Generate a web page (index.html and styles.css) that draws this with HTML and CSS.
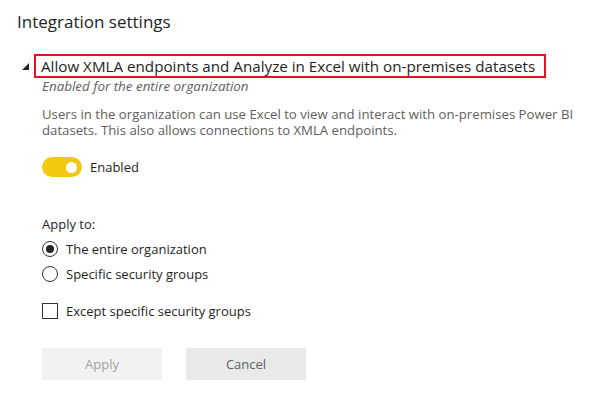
FILE: index.html
```html
<!DOCTYPE html>
<html>
<head>
<meta charset="utf-8">
<link rel="stylesheet" href="styles.css">
</head>
<body>
<div class="page">
  <h1 class="title">Integration settings</h1>
  <div class="setting">
    <div class="setting-head">
      <svg class="caret" width="7" height="7" viewBox="0 0 7 7"><polygon points="7,0 7,7 0,7" fill="#252423"/></svg>
      <div class="setting-name">Allow XMLA endpoints and Analyze in Excel with on-premises datasets</div>
    </div>
    <div class="setting-body">
      <div class="status">Enabled for the entire organization</div>
      <p class="desc">Users in the organization can use Excel to view and interact with on-premises Power BI datasets. This also allows connections to XMLA endpoints.</p>
      <div class="toggle-row">
        <span class="toggle"><span class="knob"></span></span>
        <span class="toggle-label">Enabled</span>
      </div>
      <div class="apply-label">Apply to:</div>
      <div class="option">
        <span class="radio checked"></span>
        <span>The entire organization</span>
      </div>
      <div class="option">
        <span class="radio"></span>
        <span>Specific security groups</span>
      </div>
      <div class="option check-option">
        <span class="checkbox"></span>
        <span>Except specific security groups</span>
      </div>
      <div class="buttons">
        <button class="btn btn-apply">Apply</button>
        <button class="btn btn-cancel">Cancel</button>
      </div>
    </div>
  </div>
</div>
</body>
</html>
```
FILE: styles.css
```css
* { box-sizing: border-box; }
html, body { margin: 0; padding: 0; background: #fff; }
body {
  font-family: "Open Sans", "Noto Sans", sans-serif;
  color: #252423;
  width: 610px;
  height: 403px;
  overflow: hidden;
}
.page { padding: 9px 0 0 17px; }
.title {
  font-weight: 400;
  font-size: 17px;
  line-height: 26px;
  margin: 0 0 19px 0;
  color: #252423;
}
.setting-head {
  display: flex;
  align-items: center;
}
.caret { margin: 0 6px 0 5px; }
.setting-name {
  font-size: 15.2px;
  line-height: 20px;
  border: 2px solid #e81123;
  padding: 0 5px 0 5px;
  width: 512px;
  margin-left: -1px;
}
.setting-body { padding-left: 25px; }
.status {
  font-style: italic;
  font-size: 13.4px;
  line-height: 16px;
  color: #605e5c;
}
.desc {
  margin: 12px 0 0 0;
  font-size: 13.2px;
  line-height: 16px;
  color: #605e5c;
  width: 560px;
}
.toggle-row {
  display: flex;
  align-items: center;
  margin-top: 19px;
}
.toggle {
  width: 40px;
  height: 20px;
  border-radius: 10px;
  background: #f2c811;
  position: relative;
  display: inline-block;
}
.knob {
  position: absolute;
  width: 11px;
  height: 11px;
  border-radius: 50%;
  background: #fff;
  right: 5px;
  top: 4.5px;
}
.toggle-label {
  margin-left: 8px;
  font-size: 13px;
  color: #252423;
}
.apply-label {
  margin-top: 38px;
  font-size: 13px;
  line-height: 18px;
  color: #252423;
}
.option {
  display: flex;
  align-items: center;
  font-size: 13px;
  line-height: 18px;
  margin-top: 7px;
  gap: 8px;
  color: #252423;
}
.radio {
  width: 16px;
  height: 16px;
  border-radius: 50%;
  border: 1px solid #323130;
  position: relative;
  display: inline-block;
}
.radio.checked::after {
  content: "";
  position: absolute;
  width: 8px;
  height: 8px;
  border-radius: 50%;
  background: #252423;
  left: 3px;
  top: 3px;
}
.check-option { margin-top: 19px; }
.checkbox {
  width: 16px;
  height: 16px;
  border: 1px solid #323130;
  display: inline-block;
}
.buttons {
  display: flex;
  gap: 24px;
  margin-top: 28px;
}
.btn {
  width: 120px;
  height: 32px;
  border: none;
  font-family: inherit;
  font-size: 13px;
  padding: 0;
}
.btn-apply { background: #f3f2f1; color: #a19f9d; }
.btn-cancel { background: #e9e9e9; color: #605e5c; }
```
